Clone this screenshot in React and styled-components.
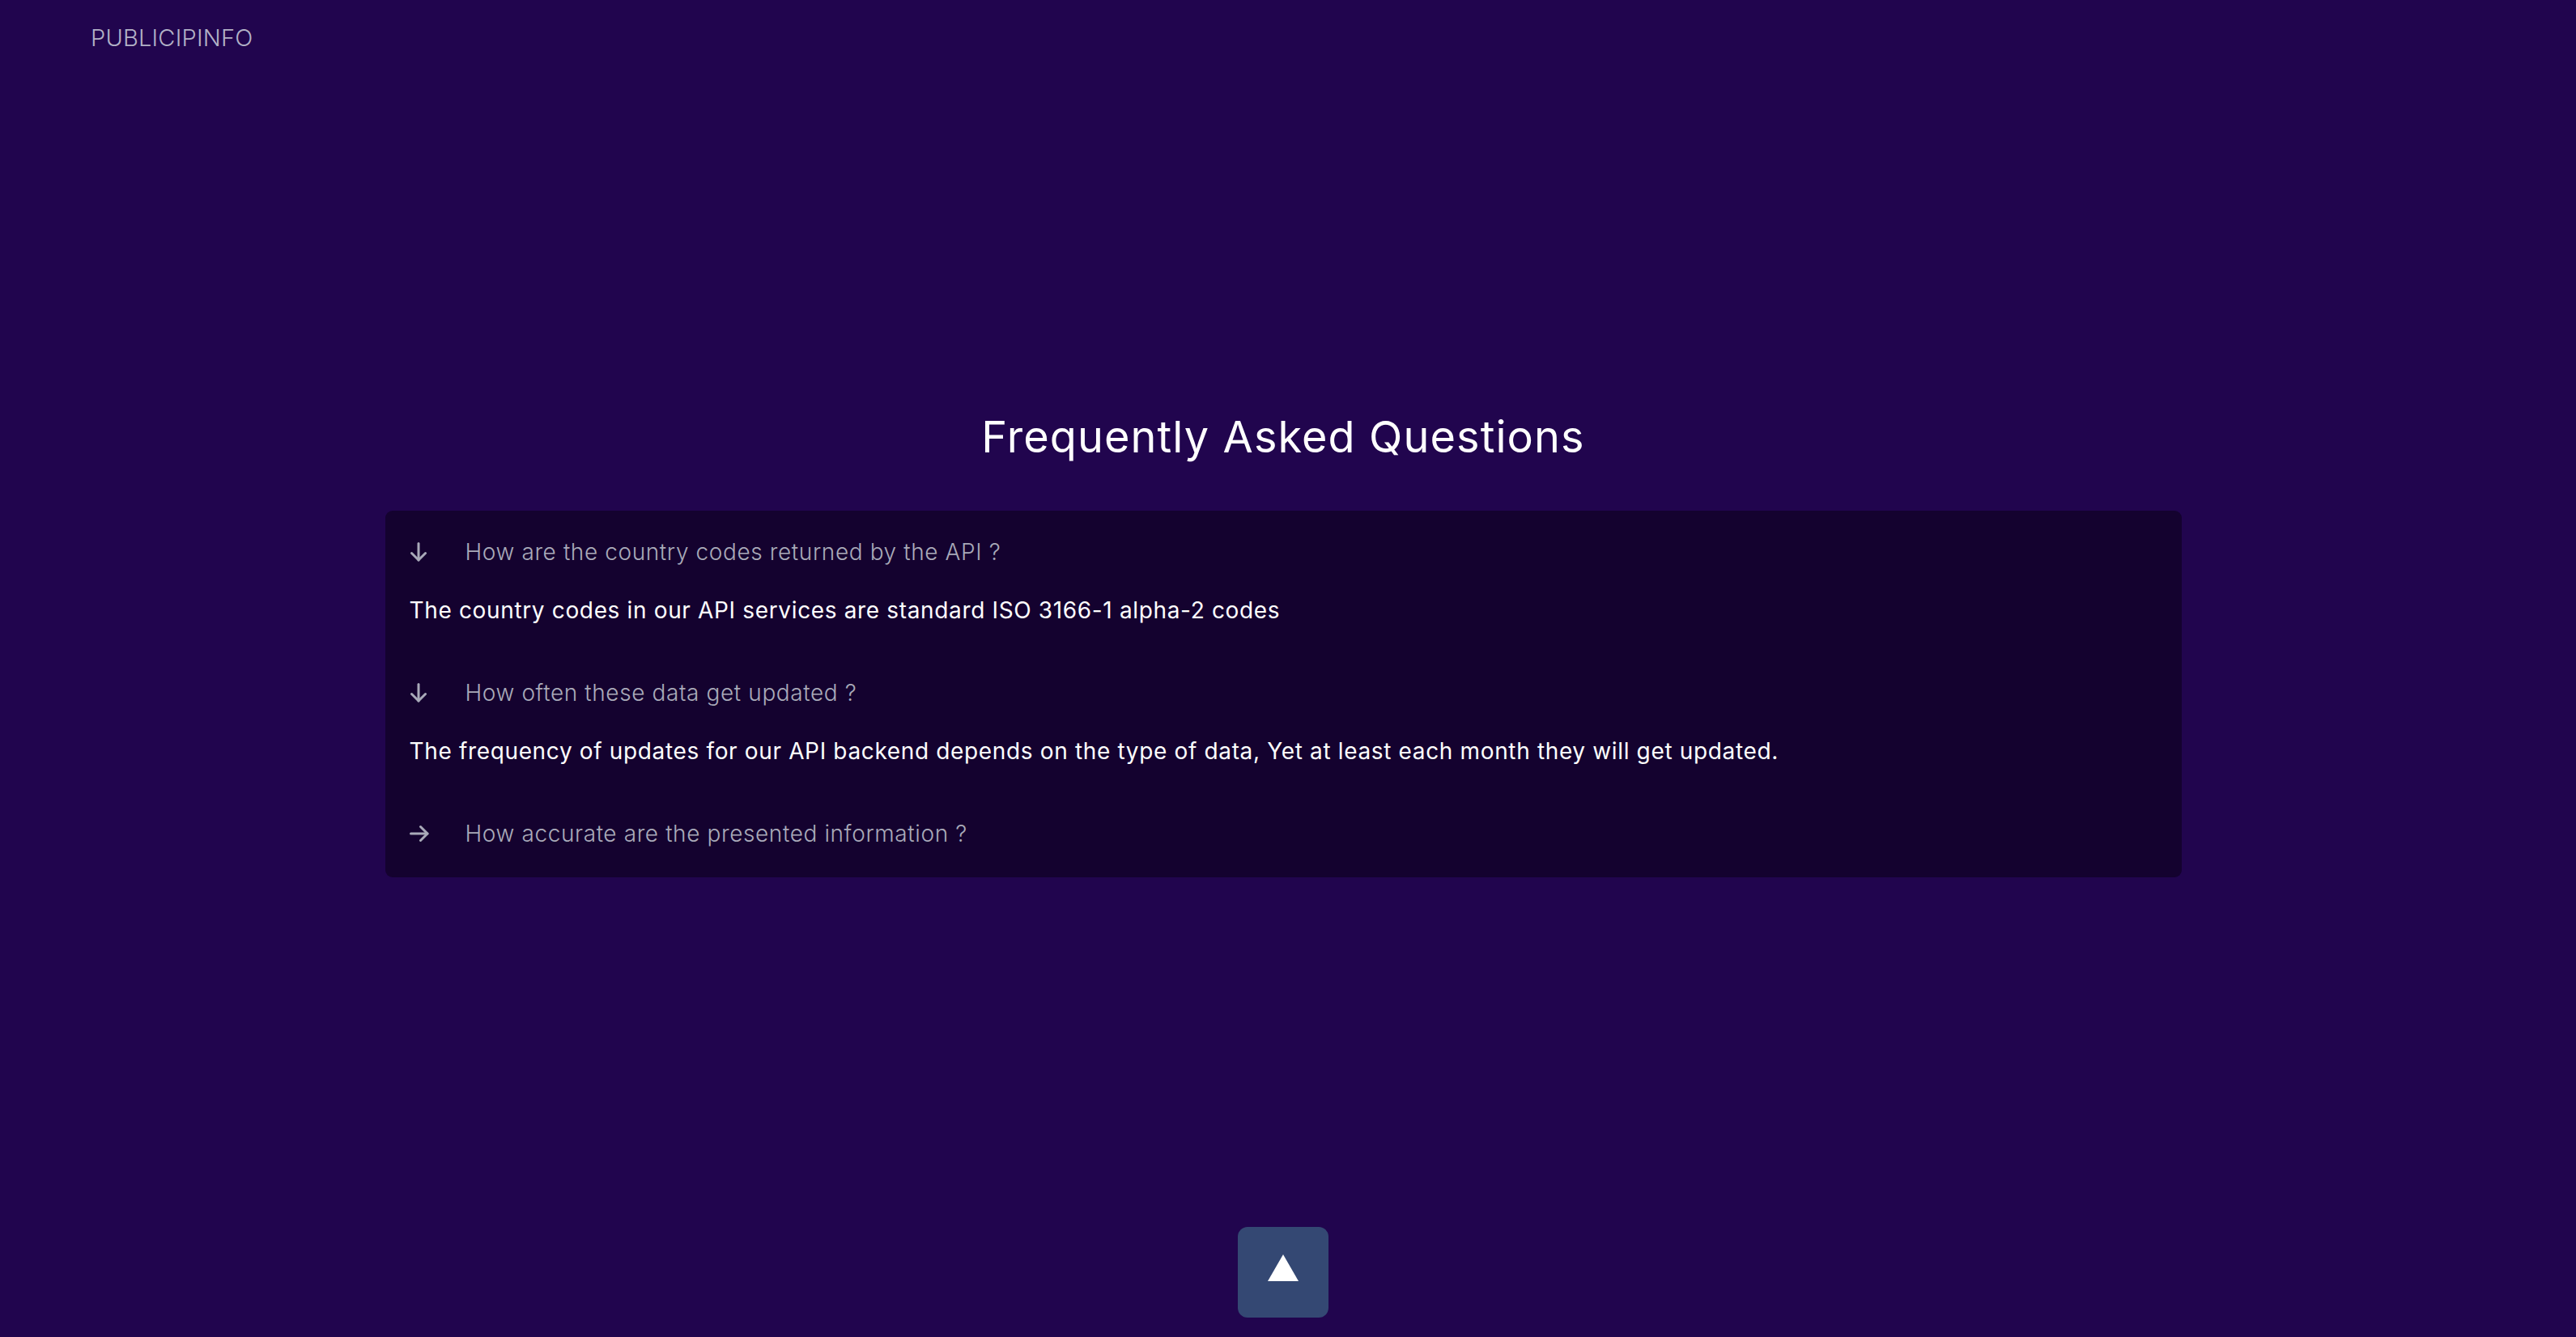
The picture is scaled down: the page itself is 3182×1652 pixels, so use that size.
import React, { useState } from 'react';
import styled, { createGlobalStyle } from 'styled-components';

const GlobalStyle = createGlobalStyle`
  * { box-sizing: border-box; }
  html, body {
    margin: 0;
    padding: 0;
    background: #21054e;
  }
  body {
    font-family: Inter, "Noto Sans", "Liberation Sans", sans-serif;
  }
`;

const faqs = [
  {
    q: 'How are the country codes returned by the API ?',
    a: 'The country codes in our API services are standard ISO 3166-1 alpha-2 codes',
  },
  {
    q: 'How often these data get updated ?',
    a: 'The frequency of updates for our API backend depends on the type of data, Yet at least each month they will get updated.',
  },
  {
    q: 'How accurate are the presented information ?',
    a: 'All data is collected from official public sources and checked regularly.',
  },
];

const ArrowDown = () => (
  <svg width="22" height="24" viewBox="0 0 22 24" fill="none" stroke="currentColor"
    strokeWidth="3" strokeLinecap="round" strokeLinejoin="round">
    <path d="M11 1.5V22" />
    <path d="M2.5 13.5L11 22l8.5-8.5" />
  </svg>
);

const ArrowRight = () => (
  <svg width="24" height="22" viewBox="0 0 24 22" fill="none" stroke="currentColor"
    strokeWidth="3" strokeLinecap="round" strokeLinejoin="round">
    <path d="M1.5 11H22" />
    <path d="M13.5 2.5L22 11l-8.5 8.5" />
  </svg>
);

const App = () => {
  const [open, setOpen] = useState([true, true, false]);

  const toggle = (i) => {
    setOpen((prev) => prev.map((v, idx) => (idx === i ? !v : v)));
  };

  return (
    <Page>
      <GlobalStyle />
      <Header>
        <Logo>PUBLICIPINFO</Logo>
      </Header>

      <Main>
        <Title>Frequently Asked Questions</Title>
        <Card>
          {faqs.map((item, i) => (
            <Item key={item.q}>
              <Question onClick={() => toggle(i)}>
                <IconBox>{open[i] ? <ArrowDown /> : <ArrowRight />}</IconBox>
                <span>{item.q}</span>
              </Question>
              {open[i] && <Answer>{item.a}</Answer>}
            </Item>
          ))}
        </Card>
      </Main>

      <Footer>
        <TopButton aria-label="Back to top">
          <Triangle />
        </TopButton>
      </Footer>
    </Page>
  );
};

const Page = styled.div`
  min-height: 100vh;
  padding-right: 12px;
  display: flex;
  flex-direction: column;
  background: #21054e;
`;

const Header = styled.header`
  padding: 27px 0 0 112px;
`;

const Logo = styled.div`
  font-size: 29px;
  line-height: 40px;
  font-weight: 300;
  color: #b2b1c6;
  letter-spacing: 0.2px;
`;

const Main = styled.main`
  padding-top: 440px;
  display: flex;
  flex-direction: column;
  align-items: center;
`;

const Title = styled.h1`
  margin: 0 0 59px;
  font-size: 54px;
  line-height: 65px;
  font-weight: 400;
  color: #ffffff;
  letter-spacing: 1.1px;
`;

const Card = styled.div`
  width: 70%;
  background: #14022f;
  border-radius: 9px;
  padding: 31px 30px 34px;
`;

const Item = styled.div`
  & + & {
    margin-top: 62px;
  }
`;

const Question = styled.div`
  display: flex;
  align-items: center;
  gap: 45px;
  font-size: 28px;
  line-height: 40px;
  font-weight: 300;
  letter-spacing: 0.6px;
  color: #a9aab9;
  cursor: pointer;
`;

const IconBox = styled.span`
  display: flex;
  width: 24px;
  justify-content: flex-start;
  color: #a9aab9;
`;

const Answer = styled.p`
  margin: 32px 0 0;
  font-size: 28px;
  line-height: 40px;
  font-weight: 400;
  letter-spacing: 0.65px;
  color: #ffffff;
`;

const Footer = styled.footer`
  margin-top: auto;
  padding-bottom: 24px;
  display: flex;
  justify-content: center;
`;

const TopButton = styled.button`
  width: 112px;
  height: 112px;
  border: none;
  border-radius: 12px;
  background: #344873;
  display: flex;
  align-items: center;
  justify-content: center;
  cursor: pointer;
  padding: 0;
`;

const Triangle = styled.span`
  width: 0;
  height: 0;
  border-left: 19px solid transparent;
  border-right: 19px solid transparent;
  border-bottom: 33px solid #ffffff;
  margin-top: -12px;
`;

export default App;
